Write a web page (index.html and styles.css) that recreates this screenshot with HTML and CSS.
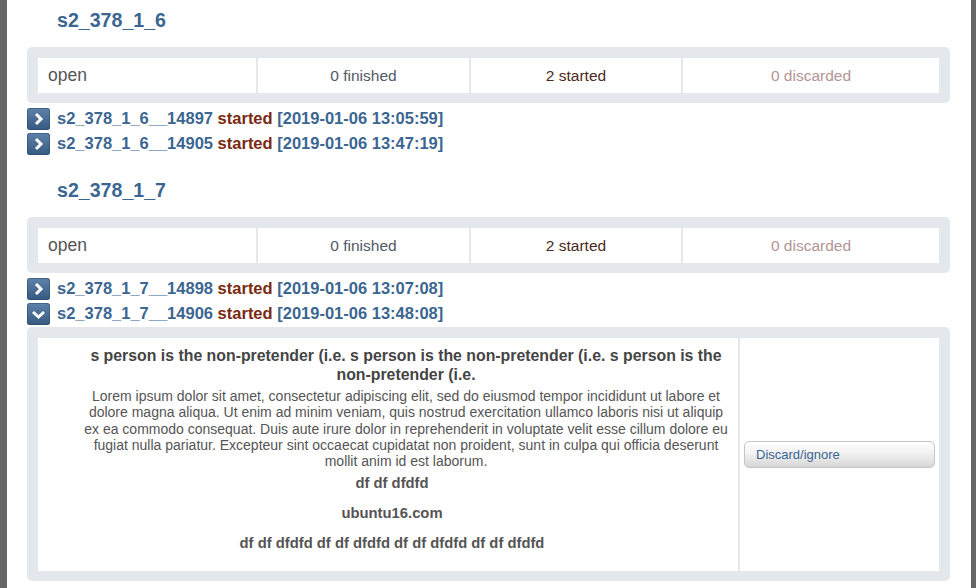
FILE: index.html
```html
<!DOCTYPE html>
<html lang="en">
<head>
<meta charset="utf-8">
<title>Runs</title>
<link rel="stylesheet" href="styles.css">
</head>
<body>
<div class="page">
  <section class="group">
    <h2 class="group-title">s2_378_1_6</h2>
    <div class="panel status">
      <div class="cell state">open</div>
      <div class="cell finished">0 finished</div>
      <div class="cell started">2 started</div>
      <div class="cell discarded">0 discarded</div>
    </div>
    <ul class="runs">
      <li class="run">
        <span class="toggle"><svg width="23" height="22" viewBox="0 0 23 22"><path d="M9 6 L14 11 L9 16" fill="none" stroke="#fff" stroke-width="3"/></svg></span>
        <span class="run-label"><span class="run-id">s2_378_1_6__14897</span> <span class="run-state">started</span> <span class="run-date">[2019-01-06 13:05:59]</span></span>
      </li>
      <li class="run">
        <span class="toggle"><svg width="23" height="22" viewBox="0 0 23 22"><path d="M9 6 L14 11 L9 16" fill="none" stroke="#fff" stroke-width="3"/></svg></span>
        <span class="run-label"><span class="run-id">s2_378_1_6__14905</span> <span class="run-state">started</span> <span class="run-date">[2019-01-06 13:47:19]</span></span>
      </li>
    </ul>
  </section>

  <section class="group">
    <h2 class="group-title">s2_378_1_7</h2>
    <div class="panel status">
      <div class="cell state">open</div>
      <div class="cell finished">0 finished</div>
      <div class="cell started">2 started</div>
      <div class="cell discarded">0 discarded</div>
    </div>
    <ul class="runs">
      <li class="run">
        <span class="toggle"><svg width="23" height="22" viewBox="0 0 23 22"><path d="M9 6 L14 11 L9 16" fill="none" stroke="#fff" stroke-width="3"/></svg></span>
        <span class="run-label"><span class="run-id">s2_378_1_7__14898</span> <span class="run-state">started</span> <span class="run-date">[2019-01-06 13:07:08]</span></span>
      </li>
      <li class="run">
        <span class="toggle"><svg width="23" height="22" viewBox="0 0 23 22"><path d="M6 9 L11.5 14 L17 9" fill="none" stroke="#fff" stroke-width="3"/></svg></span>
        <span class="run-label"><span class="run-id">s2_378_1_7__14906</span> <span class="run-state">started</span> <span class="run-date">[2019-01-06 13:48:08]</span></span>
      </li>
    </ul>
    <div class="panel detail">
      <div class="detail-main">
        <h3 class="detail-heading">s person is the non-pretender (i.e. s person is the non-pretender (i.e. s person is the non-pretender (i.e.</h3>
        <p class="detail-text">Lorem ipsum dolor sit amet, consectetur adipiscing elit, sed do eiusmod tempor incididunt ut labore et dolore magna aliqua. Ut enim ad minim veniam, quis nostrud exercitation ullamco laboris nisi ut aliquip ex ea commodo consequat. Duis aute irure dolor in reprehenderit in voluptate velit esse cillum dolore eu fugiat nulla pariatur. Excepteur sint occaecat cupidatat non proident, sunt in culpa qui officia deserunt mollit anim id est laborum.</p>
        <div class="detail-field">df df dfdfd</div>
        <div class="detail-field">ubuntu16.com</div>
        <div class="detail-field">df df dfdfd df df dfdfd df df dfdfd df df dfdfd</div>
      </div>
      <div class="detail-side">
        <button class="btn" type="button">Discard/ignore</button>
      </div>
    </div>
  </section>
</div>
</body>
</html>
```

FILE: styles.css
```css
html, body {
  margin: 0;
  padding: 0;
  background: #fff;
}

body {
  font-family: "Liberation Sans", Arial, sans-serif;
  color: #555;
}

.page {
  box-sizing: border-box;
  min-height: 100vh;
  border-left: 7px solid #666;
  border-right: 5px solid #666;
  padding: 0 21px 0 20px;
}

.group {
  padding-top: 8px;
}

.group + .group {
  margin-top: 14px;
}

.group-title {
  margin: 0 0 15px 30px;
  font-size: 19.6px;
  line-height: 24px;
  font-weight: bold;
  color: #3b6692;
}

.panel {
  background: #e4e8ec;
  border-radius: 5px;
  padding: 11px 11px 10px 11px;
}

.status {
  display: grid;
  grid-template-columns: 218px 211px 210px 1fr;
  column-gap: 2px;
}

.cell {
  background: #fff;
  height: 35px;
  line-height: 35px;
  text-align: center;
  font-size: 15.5px;
  white-space: nowrap;
}

.cell.state {
  text-align: left;
  padding-left: 10px;
  font-size: 17.5px;
  color: #555;
}

.cell.finished {
  color: #4f5a66;
}

.cell.started {
  color: #4a2a20;
}

.cell.discarded {
  color: #b39494;
}

.runs {
  list-style: none;
  margin: 3px 0 0 0;
  padding: 0;
}

.run {
  display: flex;
  align-items: center;
  height: 25px;
  font-size: 16.5px;
  font-weight: bold;
  white-space: nowrap;
}

.toggle {
  flex: none;
  display: flex;
  width: 23px;
  height: 22px;
  margin-right: 7px;
  border-radius: 3px;
  background: linear-gradient(#5e82aa, #35597f);
  box-shadow: inset 0 0 0 1px rgba(40, 70, 105, 0.5);
}

.run-id,
.run-date {
  color: #3b6692;
}

.run-state {
  color: #7a2a12;
}

.detail {
  margin-top: 1px;
  display: grid;
  grid-template-columns: 700px 1fr;
  column-gap: 2px;
}

.detail-main {
  background: #fff;
  padding: 8px 7px 18px 15px;
  text-align: center;
}

.detail-heading {
  margin: 0 0 4px 28px;
  font-size: 15.85px;
  line-height: 19px;
  font-weight: bold;
  color: #454545;
}

.detail-text {
  margin: 0 0 5px 28px;
  font-size: 14px;
  line-height: 16.25px;
  color: #555;
}

.detail-field {
  font-size: 14.8px;
  line-height: 19px;
  font-weight: bold;
  color: #555;
}

.detail-field + .detail-field {
  margin-top: 11px;
}

.detail-side {
  background: #fff;
  display: flex;
  align-items: center;
  padding: 0 4px;
}

.btn {
  width: 100%;
  height: 27px;
  padding: 0 0 0 11px;
  text-align: left;
  font-family: "Liberation Sans", Arial, sans-serif;
  font-size: 13px;
  color: #3b6692;
  border: 1px solid #c6c6c6;
  border-radius: 5px;
  background: linear-gradient(#ffffff 0%, #f2f2f2 45%, #d6d6d6 100%);
}
```
